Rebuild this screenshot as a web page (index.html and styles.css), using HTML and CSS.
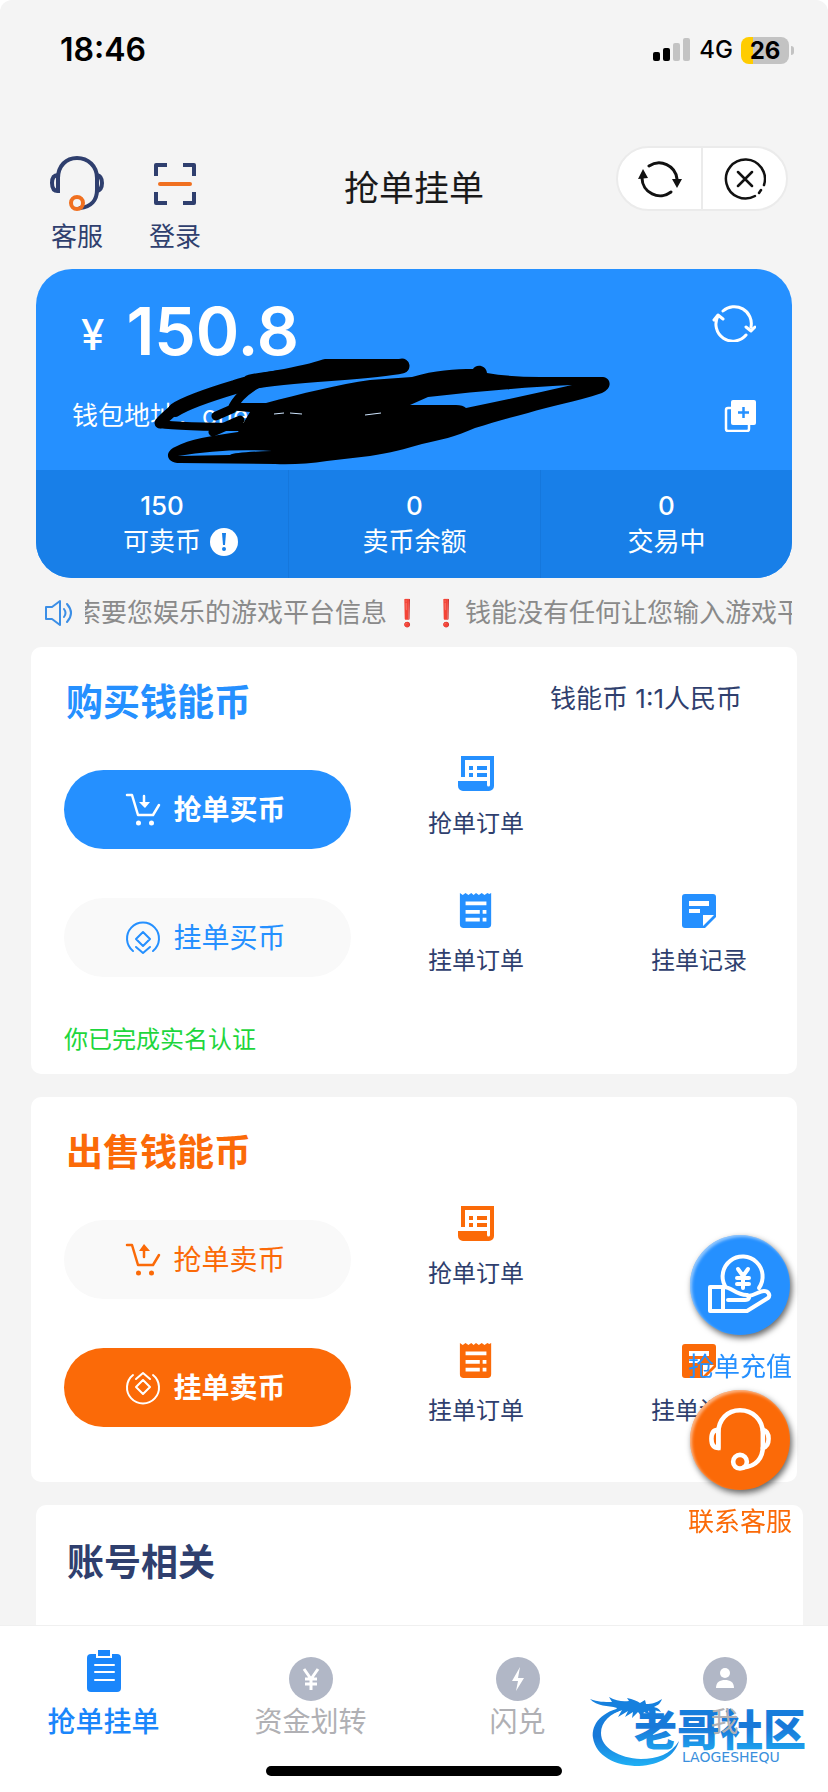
FILE: index.html
```html
<!DOCTYPE html>
<html lang="zh-CN">
<head>
  <meta charset="UTF-8" />
  <meta name="viewport" content="width=device-width, initial-scale=1.0" />
  <title>抢单挂单</title>
  <link rel="stylesheet" href="styles.css">
</head>
<body>
  <!-- shared icons -->
  <svg class="sprite" aria-hidden="true">
    <symbol id="i-scroll" viewBox="0 0 36 36">
      <path fill="currentColor" fill-rule="evenodd" d="M3 0h33v30a5 5 0 0 1-5 5H5a5 5 0 0 1-5-5v-5h3zM7 4v21h22v4a1.500 1.500 0 0 0 3 0V4z"/>
      <path fill="#fff" d="M2 21h5v4H2z"/>
      <path fill="currentColor" d="M11 10h4v4h-4zM19 10h10v4H19zM11 17h4v4h-4zM19 17h10v4H19z"/>
    </symbol>
    <symbol id="i-receipt" viewBox="0 0 36 38">
      <path fill="currentColor" d="M1 0l3 2 3-2 3 2 3-2 2.500 2L18 0l3 2 3-2 3 2 3-2 2 1 2-1v33a4 4 0 0 1-4 4H5a4 4 0 0 1-4-4z"/>
      <path fill="#fff" d="M7 9h22v4H7zM7 18h15v4H7zM25 18h4v4h-4zM7 26h15v4H7zM25 26h4v4h-4z"/>
    </symbol>
    <symbol id="i-note" viewBox="0 0 36 36">
      <path fill="currentColor" d="M4 1h28a3 3 0 0 1 3 3v20L24 35H4a3 3 0 0 1-3-3V4a3 3 0 0 1 3-3z"/>
      <path fill="#fff" d="M8 8h20v5H8zM8 16h11v4H8zM22 22h11L22 33z"/>
    </symbol>
    <symbol id="i-head" viewBox="0 0 56 56">
      <g fill="none" stroke-width="4" stroke="currentColor" stroke-linecap="round">
        <path d="M9 35V22C9 10 17 2 28 2s20 8 20 20v12c0 10-6 17-17 18"/>
        <path d="M9 19c-4 0-6 3-6 8s2 8 6 8zM48 19c4 1 5 4 5 8s-1 7-5 8"/>
      </g>
      <circle cx="28" cy="47" r="6" fill="none" stroke-width="4"/>
    </symbol>
  </svg>

  <div class="status">
    <span class="time">18:46</span>
    <div class="status-right">
      <svg width="38" height="24" viewBox="0 0 38 24"><rect y="14" width="7" height="9" rx="2"/><rect x="10" y="10" width="7" height="13" rx="2"/><g fill="#c3c3c3"><rect x="20" y="5" width="7" height="18" rx="2"/><rect x="30" width="7" height="23" rx="2"/></g></svg>
      <span class="net">4G</span>
      <span class="battery">26</span>
    </div>
  </div>

  <header class="header">
    <nav class="shortcuts">
      <a href="#">
        <svg class="navy-head" width="56" height="56"><use href="#i-head"/></svg>
        客服
      </a>
      <a href="#">
        <svg width="56" height="56" viewBox="0 0 56 56" fill="none" stroke-width="4" stroke-linejoin="round"><path stroke="#2f3f6e" d="M9 20V9h11M36 9h11v11M47 36v11H36M20 47H9V36"/><path stroke="#f07020" stroke-linecap="round" d="M13 28h30"/></svg>
        登录
      </a>
    </nav>
    <h1>抢单挂单</h1>
    <div class="capsule">
      <button type="button" aria-label="刷新">
        <svg width="46" height="40" viewBox="0 0 46 40"><g fill="none" stroke="#111" stroke-width="3" stroke-linecap="round"><path d="M12 7a18 18 0 0 1 28 13"/><path d="M34 33A18 18 0 0 1 5 19"/></g><path fill="#111" d="M1 20l5-10 5 9zM35 20h10l-5 9z"/></svg>
      </button>
      <button type="button" aria-label="关闭">
        <svg width="42" height="42" viewBox="0 0 42 42" fill="none" stroke="#111" stroke-width="2.500" stroke-linecap="round"><path d="M31 38A19.500 19.500 0 1 1 40 27M35 35l2-3M14 14l14 14M28 14L14 28"/></svg>
      </button>
    </div>
  </header>

  <section class="wallet">
    <div class="wallet-top">
      <div class="balance">
        <span class="yen">¥</span>
        <strong>150.8</strong>
        <button type="button" aria-label="刷新余额">
          <svg width="44" height="38" viewBox="0 0 44 38" fill="none" stroke="#fff" stroke-width="3" stroke-linecap="round" stroke-linejoin="round"><path d="M11 7a17 17 0 0 1 28 16M34 31A17 17 0 0 1 6 12M2 16l4-5 5 4M34 23l5 4 4-4"/></svg>
        </button>
      </div>
      <div class="address">
        <span>钱包地址：one</span>
        <button type="button" aria-label="复制">
          <svg width="32" height="32" viewBox="0 0 32 32"><path fill="none" stroke="#fff" stroke-width="2.500" d="M8 8H4a2 2 0 0 0-2 2v19a2 2 0 0 0 2 2h19a2 2 0 0 0 2-2v-5"/><rect x="7" width="25" height="25" rx="2" fill="#fff"/><path stroke="#2590ff" stroke-width="2.500" d="M14 12.500h11M19.500 7v11"/></svg>
        </button>
      </div>
    </div>
    <dl class="stats">
      <div><dd>150</dd><dt><span class="hint-wrap">可卖币<svg class="hint" viewBox="0 0 28 28"><circle cx="14" cy="14" r="14" fill="#fff"/><path fill="#187fe8" d="M12 5h4l-1 12h-2z"/><circle cx="14" cy="21" r="2" fill="#187fe8"/></svg></span></dt></div>
      <div><dd>0</dd><dt>卖币余额</dt></div>
      <div><dd>0</dd><dt>交易中</dt></div>
    </dl>
    <!-- hides the address -->
    <svg class="scribble" viewBox="36 269 756 309" aria-hidden="true">
      <g fill="none" stroke="#000" stroke-linecap="round" stroke-linejoin="round">
        <path stroke-width="14" d="M402 366H325C296 376 262 378 235 387C205 396 184 404 175 410"/>
        <path stroke-width="11" d="M175 409Q164 418 160 423"/>
        <path stroke-width="8" d="M160 424Q178 427 250 427"/>
        <path stroke-width="15" d="M402 366C370 373 290 374 250 382"/>
        <path stroke-width="9" d="M262 381Q238 394 232 409L216 416M213 432L240 420"/>
      </g>
      <path fill-rule="evenodd" d="M240 403H266C300 394 340 384 370 380L412 377C435 370 455 369 473 369C475 364 486 364 487 373Q510 377 540 377H603C611 378 613 388 602 393C575 402 550 406 528 413C508 418 492 423 475 428C455 437 440 440 422 444C405 449 390 453 370 456L327 461Q300 465 275 464L180 463C166 463 164 452 175 447C190 439 210 436 238 432L250 412L228 410ZM410 405L428 397C480 391 530 387 572 385Q520 397 466 408Q463 405 456 405ZM178 456Q225 448 272 451Q235 452 230 455Z"/>
      <path stroke="#cfe6ff" fill="none" d="M274 414l10-1M290 413l12 1M365 415l16-2"/>
    </svg>
  </section>

  <div class="notice">
    <svg width="28" height="28" viewBox="0 0 28 28" fill="none" stroke="#3b8ee6" stroke-width="2" stroke-linejoin="round" stroke-linecap="round"><path d="M1 8h6l8-6v24l-8-6H1zM19 10q3 4 0 8M22 5q8 9 0 18"/></svg>
    <p>索要您娱乐的游戏平台信息<b>❗</b><b>❗</b>钱能没有任何让您输入游戏平台信息</p>
  </div>

  <main>
    <section class="card buy">
      <div class="card-head">
        <h2>购买钱能币</h2>
        <span>钱能币 1:1人民币</span>
      </div>
      <div class="card-body">
        <div class="actions">
          <button type="button" class="pill solid">
            <svg width="36" height="36" viewBox="0 0 36 36" fill="none" stroke="currentColor" stroke-width="2.500" stroke-linecap="round" stroke-linejoin="round"><path d="M2 3h5l6 20h15l6-10M19 4v9"/><path fill="currentColor" stroke="none" d="M14 10h11l-5 6zM16 31a2.500 2.500 0 1 1-5 0a2.500 2.500 0 0 1 5 0M29 31a2.500 2.500 0 1 1-5 0a2.500 2.500 0 0 1 5 0"/></svg>
            抢单买币
          </button>
          <button type="button" class="pill">
            <svg width="36" height="36" viewBox="0 0 36 36" fill="none" stroke="currentColor" stroke-width="2" stroke-linecap="round" stroke-linejoin="round"><path d="M8 31a16 16 0 1 1 20 0M18 12l7 7-7 7-7-7zM11 27l7 6 7-6"/></svg>
            挂单买币
          </button>
        </div>
        <div class="links">
          <a href="#"><svg width="36" height="36"><use href="#i-scroll"/></svg>抢单订单</a>
          <span></span>
          <a href="#"><svg width="36" height="36"><use href="#i-receipt"/></svg>挂单订单</a>
          <a href="#"><svg width="36" height="36"><use href="#i-note"/></svg>挂单记录</a>
        </div>
      </div>
      <p class="verified">你已完成实名认证</p>
    </section>

    <section class="card sell">
      <div class="card-head">
        <h2>出售钱能币</h2>
      </div>
      <div class="card-body">
        <div class="actions">
          <button type="button" class="pill">
            <svg width="36" height="36" viewBox="0 0 36 36" fill="none" stroke="currentColor" stroke-width="2.500" stroke-linecap="round" stroke-linejoin="round"><path d="M2 3h5l6 20h15l6-10M19 7v8"/><path fill="currentColor" stroke="none" d="M14 9l5-7 6 7zM16 31a2.500 2.500 0 1 1-5 0a2.500 2.500 0 0 1 5 0M29 31a2.500 2.500 0 1 1-5 0a2.500 2.500 0 0 1 5 0"/></svg>
            抢单卖币
          </button>
          <button type="button" class="pill solid">
            <svg width="36" height="36" viewBox="0 0 36 36" fill="none" stroke="currentColor" stroke-width="2" stroke-linecap="round" stroke-linejoin="round"><path d="M8 5a16 16 0 1 0 20 0M18 10l7 7-7 7-7-7zM11 9l7-6 7 6"/></svg>
            挂单卖币
          </button>
        </div>
        <div class="links">
          <a href="#"><svg width="36" height="36"><use href="#i-scroll"/></svg>抢单订单</a>
          <span></span>
          <a href="#"><svg width="36" height="36"><use href="#i-receipt"/></svg>挂单订单</a>
          <a href="#"><svg width="36" height="36"><use href="#i-note"/></svg>挂单记录</a>
        </div>
      </div>
    </section>

    <section class="card account">
      <h2>账号相关</h2>
    </section>
  </main>

  <aside class="float">
    <a href="#" class="recharge">
      <span class="bubble">
        <svg width="64" height="64" viewBox="0 0 64 64" fill="none" stroke="#fff" stroke-width="4" stroke-linejoin="round" stroke-linecap="round"><path d="M17 33A20 20 0 1 1 51 35"/><path d="M2 34h13v24H2zM15 34c8-1 12 8 24 8 4 1 2 5-2 5H20M40 43c8-1 11-5 16-5 4 0 7 4 4 7L39 58H15"/><path stroke-width="4" d="M30 16l5 7 5-7M29 25h12M29 31h12M35 24v11"/></svg>
      </span>
      抢单充值
    </a>
    <a href="#" class="support">
      <span class="bubble">
        <svg class="white-head" width="64" height="64"><use href="#i-head"/></svg>
      </span>
      联系客服
    </a>
  </aside>

  <nav class="tabbar">
    <div class="tabs">
      <a href="#" class="active">
        <svg width="44" height="51" viewBox="0 0 44 51"><rect x="5" y="4" width="34" height="38" rx="4" fill="currentColor"/><path fill="currentColor" stroke="#fff" stroke-width="2" d="M15-1h14v8H15z"/><path stroke="#fff" stroke-width="2" stroke-linecap="round" d="M13 15h19M13 22h19M13 30h19"/></svg>
        抢单挂单
      </a>
      <a href="#">
        <svg width="44" height="51" viewBox="0 0 44 51"><circle cx="22" cy="29" r="22" fill="#b1b7c6"/><path fill="none" stroke="#fff" stroke-width="3" d="M15 19l7 10 7-10M16 29h12M16 34h12M22 28v12"/></svg>
        资金划转
      </a>
      <a href="#">
        <svg width="44" height="51" viewBox="0 0 44 51"><circle cx="22" cy="29" r="22" fill="#b1b7c6"/><path fill="#fff" d="M24 17l-8 14h6l-2 10 8-13h-6z"/></svg>
        闪兑
      </a>
      <a href="#">
        <svg width="44" height="51" viewBox="0 0 44 51"><circle cx="22" cy="29" r="22" fill="#b1b7c6"/><circle cx="22" cy="23" r="5" fill="#fff"/><path fill="#fff" d="M13 38c0-6 4-8 9-8s9 2 9 8z"/></svg>
        我
      </a>
    </div>
    <svg class="watermark" width="222" height="72" viewBox="0 0 222 72">
      <defs>
        <linearGradient id="wm" x1="0" y1="0" x2="0" y2="1"><stop offset="0" stop-color="#1583e0"/><stop offset=".5" stop-color="#1878d8"/><stop offset="1" stop-color="#1fb0f5"/></linearGradient>
      </defs>
      <path fill="url(#wm)" d="M34 11C12 15 1 28 3 42c3 18 22 28 46 28 21-1 36-10 40-25-8 13-22 18-38 18C29 62 11 52 11 37c0-11 9-20 24-24z"/>
      <path fill="#1680de" d="M0 3c8 3 14 3 22 3l-3-5c7 4 14 5 20 4l-2-3c6 1 10 3 13 5l5-3 1 4c6 0 10-1 16-5-2 5-4 6-8 8 4 1 5 2 7 5-5-2-9-2-13-1l2 4-6-3-2 5-4-5-6 6 1-6-8 5 3-6-10 6 4-7-8 3 3-5C18 9 7 11 0 3z"/>
      <text class="wm-name" x="44" y="50" fill="url(#wm)">老哥社区</text>
      <text class="wm-latin" x="92" y="66">LAOGESHEQU</text>
    </svg>
    <div class="home-bar"></div>
  </nav>
</body>
</html>
```
FILE: styles.css
```css
* { box-sizing: border-box; }
html { background: #fff; }
body {
  margin: 0;
  min-height: 100vh;
  background: #f4f4f4;
  border-radius: 12px 12px 0 0;
  font-family: Inter, "Noto Sans CJK SC", sans-serif;
  font-size: 26px;
  line-height: 36px;
  color: #2f3f6e;
}
h1, h2, p, dl, dd { margin: 0; }
a { color: inherit; text-decoration: none; }
button { padding: 0; border: none; background: none; font: inherit; color: inherit; cursor: pointer; }
svg { display: block; flex: none; }
.sprite { position: absolute; width: 0; height: 0; }

/* status bar */
.status { display: flex; justify-content: space-between; align-items: center; height: 98px; padding: 2px 34px 0 60px; color: #000; }
.time { font-size: 32px; font-weight: 600; }
.status-right { display: flex; align-items: center; gap: 8px; font-size: 24px; }
.net { font-weight: 500; }
.battery {
  position: relative;
  width: 48px;
  height: 27px;
  margin-right: 5px;
  border-radius: 8px;
  background: linear-gradient(to right, #ffcc00 12px, #c3c3c3 12px);
  font-weight: 700;
  line-height: 27px;
  text-align: center;
}
.battery::after { content: ""; position: absolute; right: -5px; top: 9px; width: 3px; height: 9px; border-radius: 0 3px 3px 0; background: #c3c3c3; }

/* header */
.header { display: grid; grid-template-columns: 1fr auto 1fr; align-items: start; height: 171px; padding: 48px 40px 0; }
.shortcuts { display: flex; gap: 24px; padding-top: 10px; }
.shortcuts a { display: flex; flex-direction: column; align-items: center; gap: 7px; width: 74px; }
.navy-head { color: #2f3f6e; stroke: #f07020; }
.header h1 { padding-top: 17px; font-size: 35px; font-weight: 400; line-height: 50px; color: #1a1a1a; }
.capsule { display: flex; justify-self: end; width: 172px; height: 65px; border: 2px solid #ebebeb; border-radius: 33px; background: #fff; }
.capsule button { display: flex; flex: 1; align-items: center; justify-content: center; }
.capsule button + button { border-left: 2px solid #ebebeb; }

/* wallet */
.wallet { position: relative; margin: 0 36px; border-radius: 36px; background: #2590ff; color: #fff; overflow: hidden; }
.wallet-top { padding: 29px 36px 36px; }
.balance { display: flex; align-items: center; height: 66px; padding-left: 9px; }
.balance strong { flex: 1; padding-left: 22px; font-size: 66px; font-weight: 600; line-height: 66px; }
.balance .yen { padding-top: 8px; font-size: 42px; font-weight: 500; }
.balance button { padding-bottom: 16px; }
.address { display: flex; justify-content: space-between; align-items: center; margin-top: 34px; }
.stats { display: grid; grid-template-columns: repeat(3, 1fr); background: #187fe8; text-align: center; }
.stats div { display: flex; flex-direction: column; padding: 18px 0; }
.stats div + div { border-left: 1px solid #1577dc; }
.stats dd { font-weight: 500; }
.hint-wrap { position: relative; }
.hint { position: absolute; left: 100%; top: 2px; width: 28px; height: 28px; margin-left: 9px; }
.scribble { position: absolute; left: 0; top: 0; width: 100%; pointer-events: none; }

/* notice */
.notice { display: flex; align-items: center; gap: 12px; margin: 17px 36px 16px 45px; color: #8a8a8a; }
.notice p { flex: 1; min-width: 0; overflow: hidden; white-space: nowrap; text-indent: -10px; }
.notice b { display: inline-block; width: 39px; font-family: "DejaVu Sans", sans-serif; line-height: 30px; text-align: center; text-indent: 0; color: #d9000d; }

/* cards */
.card { margin: 0 31px 23px; padding: 32px 0 53px 33px; border-radius: 10px; background: #fff; }
.card h2 { padding-left: 2px; font-size: 37px; font-weight: 700; line-height: 48px; }
.card-head { display: flex; justify-content: space-between; align-items: flex-start; padding-right: 55px; }
.card-head span { line-height: 40px; }
.card-body { display: grid; grid-template-columns: 287fr 446fr; margin-top: 29px; }
.actions { display: flex; flex-direction: column; gap: 49px; padding-top: 14px; }
.pill { display: flex; align-items: center; justify-content: center; gap: 12px; height: 79px; padding-right: 4px; border-radius: 40px; background: #f9f9f9; font-size: 28px; }
.pill.solid { font-weight: 700; color: #fff; }
.links { display: grid; grid-template-columns: 250fr 196fr; row-gap: 51px; font-size: 24px; }
.links a { display: flex; flex-direction: column; align-items: center; gap: 14px; }
.buy { padding-bottom: 16px; }
.buy h2, .buy .pill, .buy .links svg { color: #2590ff; }
.sell h2, .sell .pill, .sell .links svg { color: #fb6a08; }
.buy .pill.solid { background: #2590ff; color: #fff; }
.sell .pill.solid { background: #fb6a08; color: #fff; }
.verified { margin-top: 43px; font-size: 24px; color: #1ed63c; }
.account { min-height: 160px; margin: 0 25px 0 36px; padding: 34px 29px; }

/* floating buttons */
.float { position: fixed; right: 36px; bottom: 252px; display: flex; flex-direction: column; gap: 5px; z-index: 2; }
.float a { display: flex; flex-direction: column; align-items: center; gap: 14px; }
.bubble {
  display: flex;
  align-items: center;
  justify-content: center;
  width: 100px;
  height: 100px;
  border-radius: 50%;
  box-shadow: 2px 3px 6px rgba(0, 0, 0, 0.6), inset 2px 2px 3px rgba(255, 255, 255, 0.5);
}
.recharge { color: #2590ff; }
.support { color: #fb6a08; }
.recharge .bubble { background: #2590ff; }
.support .bubble { background: #fb6a08; }
.white-head { color: #fff; stroke: #fff; }

/* tab bar */
.tabbar { position: fixed; left: 0; right: 0; bottom: 0; padding: 24px 0 16px; border-top: 1px solid #f0f0f0; background: #fff; z-index: 3; }
.tabs { position: relative; display: grid; grid-template-columns: repeat(4, 1fr); font-size: 28px; color: #b0b0b4; z-index: 1; }
.tabs a { display: flex; flex-direction: column; align-items: center; gap: 3px; }
.tabs .active { font-weight: 500; color: #1a86fb; }
.watermark { position: absolute; right: 16px; bottom: 24px; }
.wm-name { font-family: "Noto Sans CJK SC", sans-serif; font-size: 43px; font-weight: 900; }
.wm-latin { font-family: "DejaVu Sans", sans-serif; font-size: 14px; fill: #3a8fdc; }
.home-bar { width: 296px; height: 10px; margin: 26px auto 0; border-radius: 5px; background: #000; }
```
